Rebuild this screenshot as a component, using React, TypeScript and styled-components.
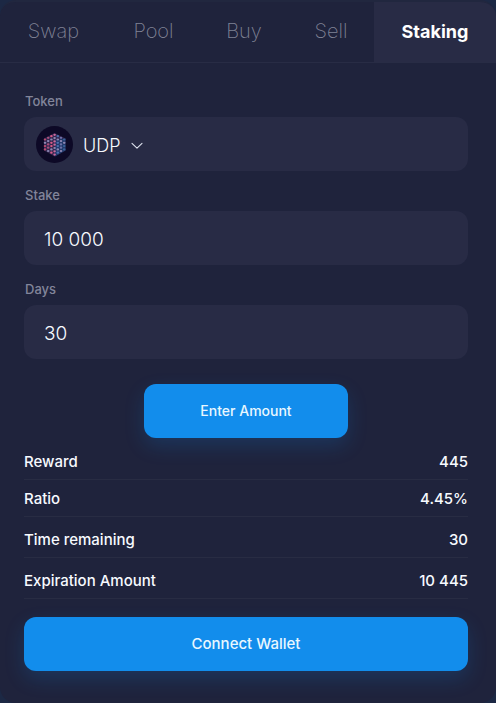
import React from "react";
import styled, { createGlobalStyle } from "styled-components";

const GlobalStyle = createGlobalStyle`
  *, *::before, *::after { box-sizing: border-box; }
  body {
    margin: 0;
    background: #1c2844;
    color: #f7faff;
    font-family: Inter, "Liberation Sans", sans-serif;
  }
  button, input, select { font: inherit; color: inherit; }
`;

const Card = styled.main`
  min-height: 100vh;
  border-radius: 16px;
  overflow: hidden;
  background: #1f233c;
  border-top: 2px solid #21273f;
`;

const Tabs = styled.nav`
  display: grid;
  grid-template-columns: 107fr 93fr 88fr 86fr 122fr;
  height: 61px;
  border-bottom: 1px solid #282c45;
`;

const Tab = styled.button<{ $active?: boolean }>`
  border: 0;
  padding: 0 0 2px;
  cursor: pointer;
  text-align: center;
  white-space: nowrap;
  background: ${(p) => (p.$active ? "#282b45" : "transparent")};
  color: ${(p) => (p.$active ? "#ffffff" : "#7f8295")};
  font-size: ${(p) => (p.$active ? "18px" : "20px")};
  font-weight: ${(p) => (p.$active ? 700 : 200)};
`;

const Panel = styled.form`
  padding: 28px 28px 32px 24px;
`;

const Field = styled.div`
  margin-bottom: 14px;
`;

const Label = styled.label`
  display: block;
  padding: 0 1px;
  height: 26px;
  line-height: 20px;
  font-size: 13px;
  font-weight: 500;
  color: #82859a;
`;

const TextInput = styled.input`
  display: block;
  width: 100%;
  height: 54px;
  padding: 2px 20px 0;
  border: 0;
  border-radius: 12px;
  outline-color: #128dec;
  background: #282b45;
  font-size: 19px;
  font-weight: 300;
`;

const TokenBox = styled.div`
  display: flex;
  align-items: center;
  gap: 10px;
  height: 54px;
  padding: 0 12px;
  border-radius: 12px;
  background: #282b45;
`;

const SelectWrap = styled.div`
  display: grid;
  grid-template-columns: auto 12px;
  align-items: center;
`;

const TokenSelect = styled.select`
  grid-area: 1 / 1 / 2 / 3;
  appearance: none;
  border: 0;
  outline-color: #128dec;
  background: transparent;
  height: 40px;
  padding: 2px 22px 0 0;
  font-size: 18px;
  font-weight: 300;
  cursor: pointer;
`;

const Chevron = styled.svg`
  grid-area: 1 / 2;
  margin-top: 4px;
  pointer-events: none;
`;

const ActionButton = styled.button<{ $compact?: boolean }>`
  display: block;
  width: ${(p) => (p.$compact ? "46%" : "100%")};
  height: 54px;
  margin: ${(p) => (p.$compact ? "25px auto 5px" : "18px 0 0")};
  padding: 0 0 2px;
  border: 0;
  border-radius: 12px;
  background: #128dec;
  box-shadow: 0 8px 20px rgba(18, 141, 236, 0.18);
  font-size: ${(p) => (p.$compact ? "14px" : "15px")};
  font-weight: 500;
  color: #e9f7ff;
  cursor: pointer;
`;

const Summary = styled.dl`
  margin: 0;
`;

const SummaryRow = styled.div<{ $tight?: boolean }>`
  display: flex;
  justify-content: space-between;
  align-items: flex-end;
  height: ${(p) => (p.$tight ? "37px" : "41px")};
  padding-bottom: 7px;
  border-bottom: 1px solid #282c43;
  line-height: 20px;
  font-size: 15px;
  font-weight: 500;
`;

const Term = styled.dt``;

const Value = styled.dd`
  margin: 0;
`;

const dotColumns = [
  { x: 9, y: 13.5, n: 4, color: "#b94a72" },
  { x: 12.2, y: 11.8, n: 5, color: "#a94f7c" },
  { x: 15.4, y: 10.2, n: 6, color: "#d85a88" },
  { x: 18.6, y: 8.8, n: 7, color: "#c9689c" },
  { x: 21.8, y: 10.2, n: 6, color: "#4a6fae" },
  { x: 25, y: 11.8, n: 5, color: "#6d72aa" },
  { x: 28.2, y: 13.5, n: 4, color: "#3a6299" },
];

function TokenIcon() {
  return (
    <svg width="37" height="37" viewBox="0 0 37 37" aria-hidden="true">
      <circle cx="18.5" cy="18.5" r="18.5" fill="#0d0926" />
      <path d="M18.5 7 L29.5 12.5 V24.5 L18.5 30.5 L8 24.5 V12.5Z" fill="#33274f" />
      <path d="M19 14 L29.5 12.5 V24.5 L19 30.5Z" fill="#21386a" />
      {dotColumns.map((c) =>
        Array.from({ length: c.n }, (_, i) => (
          <ellipse
            key={`${c.x}-${i}`}
            cx={c.x}
            cy={c.y + i * 3.3}
            rx="1.3"
            ry="1.1"
            fill={i % 3 === 1 ? "#8d86b4" : c.color}
          />
        ))
      )}
    </svg>
  );
}

const tabs = ["Swap", "Pool", "Buy", "Sell", "Staking"];

const summary = [
  { label: "Reward", value: "445", tight: true },
  { label: "Ratio", value: "4.45%", tight: true },
  { label: "Time remaining", value: "30" },
  { label: "Expiration Amount", value: "10 445" },
];

export default function App() {
  return (
    <>
      <GlobalStyle />
      <Card>
        <Tabs aria-label="Exchange sections">
          {tabs.map((name) => (
            <Tab
              key={name}
              type="button"
              $active={name === "Staking"}
              aria-current={name === "Staking" ? "page" : undefined}
            >
              {name}
            </Tab>
          ))}
        </Tabs>
        <Panel onSubmit={(e) => e.preventDefault()}>
          <Field>
            <Label htmlFor="token">Token</Label>
            <TokenBox>
              <TokenIcon />
              <SelectWrap>
                <TokenSelect id="token" defaultValue="UDP">
                  <option>UDP</option>
                </TokenSelect>
                <Chevron width="12" height="8" viewBox="0 0 12 8" fill="none" aria-hidden="true">
                  <path d="M1 1.4 L6 6.2 L11 1.4" stroke="#dfe3ee" strokeWidth="1.1" strokeLinecap="round" strokeLinejoin="round" />
                </Chevron>
              </SelectWrap>
            </TokenBox>
          </Field>
          <Field>
            <Label htmlFor="stake">Stake</Label>
            <TextInput id="stake" inputMode="numeric" defaultValue="10 000" />
          </Field>
          <Field>
            <Label htmlFor="days">Days</Label>
            <TextInput id="days" inputMode="numeric" defaultValue="30" />
          </Field>
          <ActionButton type="submit" $compact>
            Enter Amount
          </ActionButton>
          <Summary>
            {summary.map((row) => (
              <SummaryRow key={row.label} $tight={row.tight}>
                <Term>{row.label}</Term>
                <Value>{row.value}</Value>
              </SummaryRow>
            ))}
          </Summary>
          <ActionButton type="button">Connect Wallet</ActionButton>
        </Panel>
      </Card>
    </>
  );
}
